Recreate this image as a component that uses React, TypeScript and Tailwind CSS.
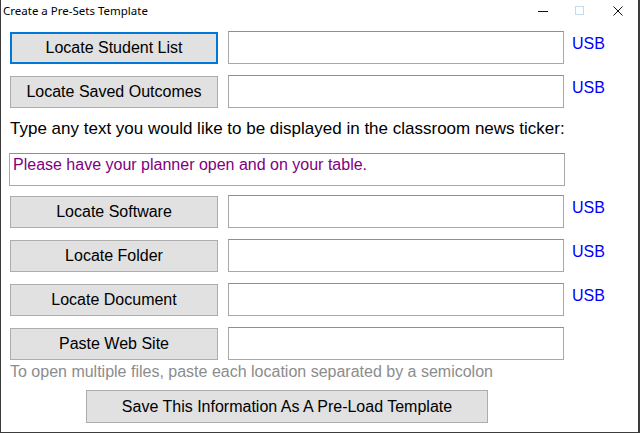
import React from 'react';

const font = { fontFamily: '"Liberation Sans", Arial, sans-serif' };

const Row: React.FC<{ label: string; usb?: boolean; focused?: boolean; className?: string }> = ({
  label,
  usb,
  focused,
  className = '',
}) => {
  return (
    <div className={`flex items-center h-[33px] ${className}`}>
      <button
        className={`w-[208px] h-[32px] bg-[#e1e1e1] text-[16px] text-black ${
          focused ? 'border-2 border-[#0078d7]' : 'border border-[#adadad]'
        }`}
      >
        {label}
      </button>
      <div className="ml-[10px] w-[336px] h-[33px] border border-[#a9a9a9] border-t-[#8f8f8f] bg-white" />
      {usb && <span className="ml-[8px] -mt-[8px] text-[16px] text-[#0000ff]">USB</span>}
    </div>
  );
};

export default function App() {
  return (
    <div className="w-[640px] h-[433px] bg-white border-l border-r-2 border-b border-[#3c3c3c] flex flex-col" style={font}>
      {/* title bar */}
      <div className="h-[22px] flex items-center relative">
        <span className="ml-[2px] text-[11.5px] text-black" style={{ fontFamily: '"Noto Sans", "Open Sans", sans-serif' }}>
          Create a Pre-Sets Template
        </span>
        <div className="ml-auto flex items-center h-full">
          <svg width="10" height="10" viewBox="0 0 10 10" className="mr-[27px]">
            <path d="M0 5.5h10" stroke="#111" strokeWidth="1" />
          </svg>
          <svg width="10" height="10" viewBox="0 0 10 10" className="mr-[28px]">
            <rect x="0.5" y="0.5" width="8" height="8" fill="none" stroke="#c2dbf0" strokeWidth="1" />
          </svg>
          <svg width="10" height="10" viewBox="0 0 10 10" className="mr-[15px]">
            <path d="M0.5 0.5l9 9M9.5 0.5l-9 9" stroke="#111" strokeWidth="1" />
          </svg>
        </div>
      </div>

      <div className="flex flex-col pl-[9px] pt-[9px]">
        <Row label="Locate Student List" usb focused />
        <Row label="Locate Saved Outcomes" usb className="mt-[11px]" />

        <div className="mt-[11px] h-[20px] leading-[20px] text-[17px] text-black">
          Type any text you would like to be displayed in the classroom news ticker:
        </div>

        <div className="mt-[14px] -ml-px w-[556px] h-[33px] border border-[#a9a9a9] border-t-[#8f8f8f] flex items-start pl-[3px] pt-[1px]">
          <span className="text-[16px] leading-[20px] text-[#800080]">Please have your planner open and on your table.</span>
        </div>

        <Row label="Locate Software" usb className="mt-[9px]" />
        <Row label="Locate Folder" usb className="mt-[11px]" />
        <Row label="Locate Document" usb className="mt-[11px]" />
        <Row label="Paste Web Site" className="mt-[11px]" />

        <div className="mt-[2px] h-[20px] leading-[20px] text-[16px] text-[#8c8c8c]">
          To open multiple files, paste each location separated by a semicolon
        </div>

        <button className="mt-[8px] ml-[76px] w-[402px] h-[33px] bg-[#e1e1e1] border border-[#adadad] text-[16px] text-black">
          Save This Information As A Pre-Load Template
        </button>
      </div>
    </div>
  );
}
